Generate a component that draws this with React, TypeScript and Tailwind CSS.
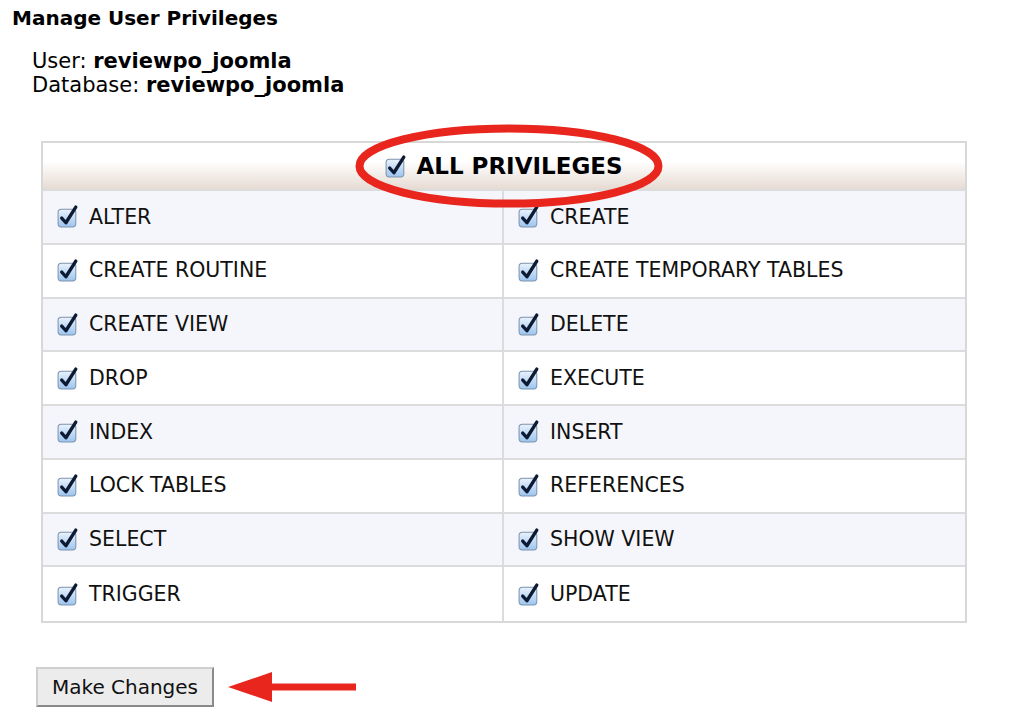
import React from 'react';

const rows: [string, string][] = [
  ['ALTER', 'CREATE'],
  ['CREATE ROUTINE', 'CREATE TEMPORARY TABLES'],
  ['CREATE VIEW', 'DELETE'],
  ['DROP', 'EXECUTE'],
  ['INDEX', 'INSERT'],
  ['LOCK TABLES', 'REFERENCES'],
  ['SELECT', 'SHOW VIEW'],
  ['TRIGGER', 'UPDATE'],
];

const Check = () => (
  <svg width="23" height="25" viewBox="0 0 22 24" className="shrink-0">
    <defs>
      <linearGradient id="cbg" x1="0" y1="0" x2="0" y2="1">
        <stop offset="0" stopColor="#eaf3fd" />
        <stop offset="1" stopColor="#9cc4ee" />
      </linearGradient>
    </defs>
    <rect x="1" y="5" width="17" height="17" rx="3" fill="url(#cbg)" stroke="#7d93ad" strokeWidth="1" />
    <path d="M4.5 13.5 L8.5 18 L18 3" fill="none" stroke="#0d1a33" strokeWidth="3.2" strokeLinecap="round" strokeLinejoin="round" />
  </svg>
);

const Cell = ({ label, border }: { label: string; border?: boolean }) => (
  <div className={`flex items-center gap-[9px] pl-[14px] h-full ${border ? 'border-r-2 border-[#dcdcdc]' : ''}`}>
    <Check />
    <span className="text-[20.5px] text-[#111]">{label}</span>
  </div>
);

export default function App() {
  return (
    <div className="w-[1024px] h-[722px] bg-white overflow-hidden" style={{ fontFamily: '"DejaVu Sans", Verdana, sans-serif' }}>
      <h1 className="pl-[12px] pt-[6px] text-[20px] font-bold text-black leading-[24px]">Manage User Privileges</h1>

      <div className="pl-[32px] pt-[19px] text-[21px] leading-[24px] text-black">
        <div>User: <b>reviewpo_joomla</b></div>
        <div>Database: <b>reviewpo_joomla</b></div>
      </div>

      <div className="relative ml-[41px] mt-[44px] w-[926px] border-2 border-[#d8d8d8]">
        <div className="h-[48px] flex items-center justify-center gap-[8px] bg-gradient-to-b from-white from-40% to-[#e6dbd3] border-b-2 border-[#dcdcdc]">
          <Check />
          <span className="text-[23px] font-bold text-black">ALL PRIVILEGES</span>
        </div>
        {rows.map(([a, b], i) => (
          <div
            key={a}
            className={`grid grid-cols-2 h-[53.75px] ${i % 2 === 0 ? 'bg-[#f5f6fb]' : 'bg-white'} ${i < rows.length - 1 ? 'border-b-2 border-[#dcdcdc]' : ''}`}
          >
            <Cell label={a} border />
            <Cell label={b} />
          </div>
        ))}

        {/* red annotation ellipse */}
        <svg className="absolute left-[311px] top-[-20px] pointer-events-none" width="310" height="86" viewBox="0 0 310 86">
          <ellipse cx="155" cy="43" rx="149.5" ry="37.5" fill="none" stroke="#e8261e" strokeWidth="8" />
        </svg>
      </div>

      <div className="flex items-center mt-[44px] ml-[36px] gap-[12px]">
        <button className="h-[40px] px-[14px] text-[20px] text-[#111] bg-[#ececec] border-2 border-t-[#cfcfcf] border-l-[#cfcfcf] border-r-[#8a8a8a] border-b-[#8a8a8a]">
          Make Changes
        </button>
        <svg width="132" height="34" viewBox="0 0 132 34">
          <path d="M2 17 L46 2 L46 13.5 L130 13.5 L130 20.5 L46 20.5 L46 32 Z" fill="#e8261e" />
        </svg>
      </div>
    </div>
  );
}
